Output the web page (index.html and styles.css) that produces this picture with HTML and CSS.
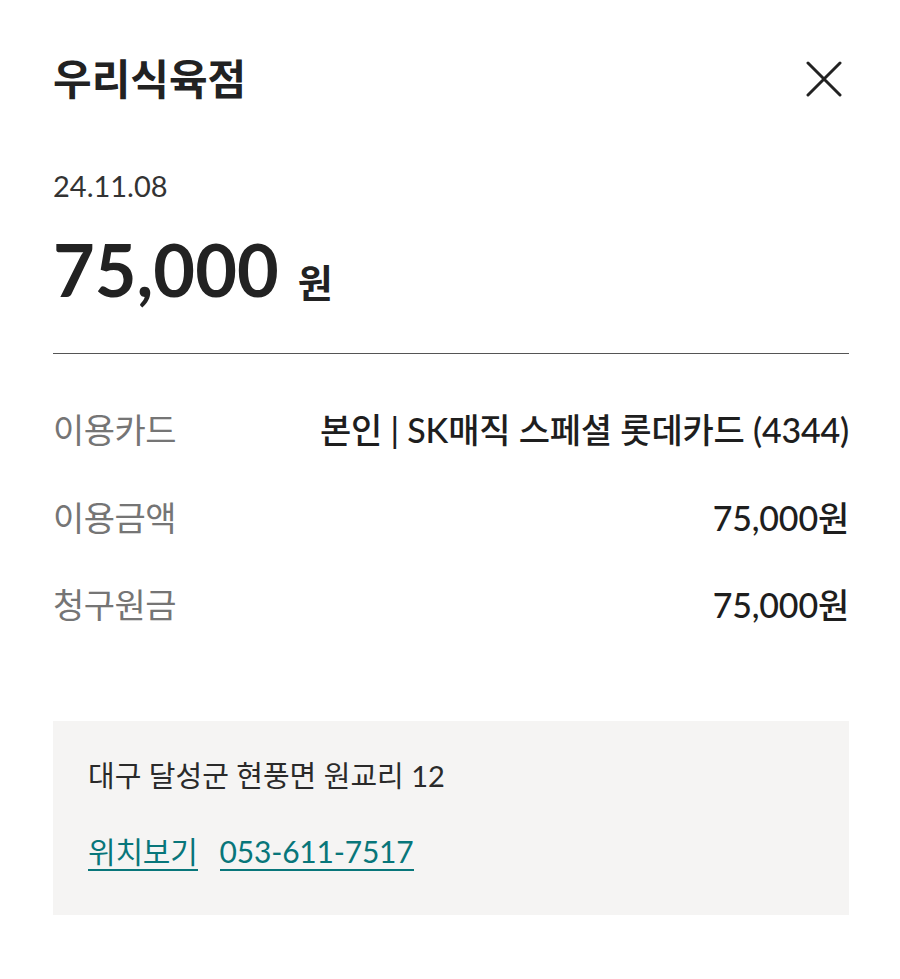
FILE: index.html
```html
<!DOCTYPE html>
<html lang="ko">
  <head>
    <meta charset="UTF-8" />
    <meta name="viewport" content="width=device-width, initial-scale=1.0" />
    <title>우리식육점</title>
    <link rel="stylesheet" href="styles.css">
  </head>
  <body>
    <div class="sheet">
      <div class="header">
        <h1 class="store">우리식육점</h1>
        <button class="close" aria-label="닫기">
          <svg width="36" height="36" viewBox="0 0 36 36">
            <path d="M2 2 L34 34 M34 2 L2 34" stroke="#222" stroke-width="3" stroke-linecap="round" fill="none" />
          </svg>
        </button>
      </div>

      <div class="date">24.11.08</div>
      <div class="total">
        <span class="total-num">75,000</span>
        <span class="total-unit">원</span>
      </div>

      <div class="details">
        <div class="row">
          <span class="label">이용카드</span>
          <span class="value">본인 | SK매직 스페셜 롯데카드 (4344)</span>
        </div>
        <div class="row">
          <span class="label">이용금액</span>
          <span class="value">75,000원</span>
        </div>
        <div class="row">
          <span class="label">청구원금</span>
          <span class="value">75,000원</span>
        </div>
      </div>

      <div class="shop-info">
        <p class="address">대구 달성군 현풍면 원교리 12</p>
        <div class="links">
          <a href="#">위치보기</a>
          <a href="#">053-611-7517</a>
        </div>
      </div>
    </div>
  </body>
</html>
```

FILE: styles.css
```css
* {
  margin: 0;
  padding: 0;
  box-sizing: border-box;
  font-family: "Lato", "Noto Sans CJK KR", sans-serif;
}

body {
  background: #fff;
  color: #222;
}

.sheet {
  padding: 52px 51px 60px 53px;
}

.header {
  display: flex;
  justify-content: space-between;
  align-items: center;
}

.store {
  font-size: 42px;
  font-weight: 700;
  line-height: 54px;
}

.close {
  border: none;
  background: none;
  width: 36px;
  height: 36px;
  margin-right: 7px;
  cursor: pointer;
}

.date {
  margin-top: 64px;
  font-size: 29px;
  line-height: 32px;
  color: #333;
}

.total {
  display: flex;
  align-items: baseline;
  margin-top: 22px;
  padding-bottom: 39px;
  border-bottom: 1.5px solid #555;
}

.total-num {
  font-size: 72px;
  font-weight: 700;
  line-height: 90px;
}

.total-unit {
  margin-left: 19px;
  font-size: 38px;
  font-weight: 700;
}

.details {
  padding-top: 31px;
}

.row {
  display: flex;
  justify-content: space-between;
  align-items: center;
  height: 87.5px;
  font-size: 34px;
  letter-spacing: -0.5px;
}

.label {
  color: #757575;
}

.value {
  color: #1e1e1e;
  font-weight: 500;
  letter-spacing: -0.2px;
}

.shop-info {
  margin-top: 73px;
  background: #f5f4f3;
  padding: 37px 35px 44px;
}

.address {
  font-size: 29px;
  line-height: 36px;
  color: #2a2a2a;
}

.links {
  display: flex;
  gap: 22px;
  margin-top: 39px;
}

.links a {
  font-size: 30px;
  line-height: 36px;
  letter-spacing: -0.2px;
  color: #08767a;
  text-decoration: none;
  border-bottom: 2px solid #08767a;
}
```
